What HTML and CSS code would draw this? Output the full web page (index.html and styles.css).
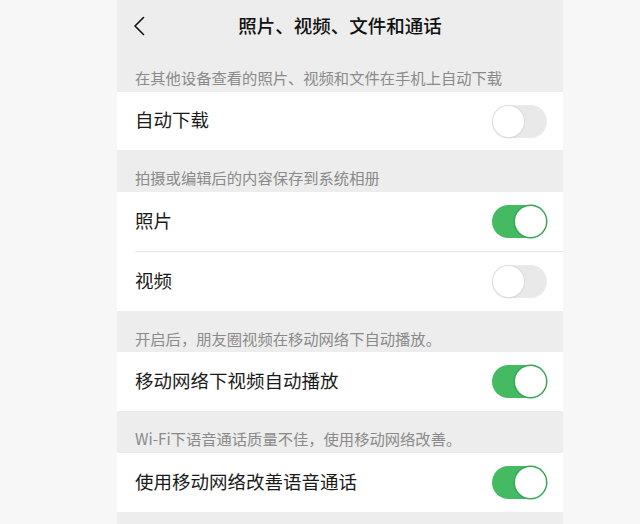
FILE: index.html
```html
<!DOCTYPE html>
<html lang="zh-CN">
<head>
<meta charset="utf-8">
<title>照片、视频、文件和通话</title>
<link rel="stylesheet" href="styles.css">
</head>
<body>
<div class="phone">
  <header class="nav">
    <svg class="back" width="12" height="20" viewBox="0 0 12 20"><path d="M10.5 1.5 L2 10 L10.5 18.5" fill="none" stroke="#111" stroke-width="1.6" stroke-linecap="round" stroke-linejoin="round"/></svg>
    <h1 class="title">照片、视频、文件和通话</h1>
  </header>

  <div class="caption">在其他设备查看的照片、视频和文件在手机上自动下载</div>
  <div class="group">
    <div class="row first"><span class="label">自动下载</span><span class="switch"></span></div>
  </div>

  <div class="caption">拍摄或编辑后的内容保存到系统相册</div>
  <div class="group">
    <div class="row"><span class="label">照片</span><span class="switch on"></span></div>
    <div class="divider"></div>
    <div class="row"><span class="label">视频</span><span class="switch"></span></div>
  </div>

  <div class="caption short">开启后，朋友圈视频在移动网络下自动播放。</div>
  <div class="group">
    <div class="row"><span class="label">移动网络下视频自动播放</span><span class="switch on"></span></div>
  </div>

  <div class="caption">Wi-Fi下语音通话质量不佳，使用移动网络改善。</div>
  <div class="group">
    <div class="row"><span class="label">使用移动网络改善语音通话</span><span class="switch on"></span></div>
  </div>
</div>
</body>
</html>
```

FILE: styles.css
```css
html, body {
  margin: 0;
  padding: 0;
  background: #f7f7f7;
  height: 100%;
  overflow: hidden;
}
body {
  font-family: "Noto Sans CJK SC", "Noto Sans", sans-serif;
}
.phone {
  margin-left: 117px;
  width: 446px;
  height: 524px;
  background: #ededed;
  display: flex;
  flex-direction: column;
}
.nav {
  height: 50px;
  display: flex;
  align-items: center;
  justify-content: center;
  position: relative;
}
.back {
  position: absolute;
  left: 16px;
  top: 16px;
}
.title {
  margin: 0;
  font-size: 18.5px;
  font-weight: 500;
  color: #111;
  line-height: 1;
}
.caption {
  height: 42px;
  box-sizing: border-box;
  padding: 17px 0 0 18px;
  font-size: 15.3px;
  line-height: 20px;
  color: #8a8a8a;
}
.caption.short { height: 41px; }
.group {
  background: #fff;
  display: flex;
  flex-direction: column;
}
.row {
  height: 59px;
  display: flex;
  align-items: center;
  justify-content: space-between;
  padding: 0 16px 0 18px;
}
.row.first { height: 58px; }
.divider {
  height: 1px;
  margin-left: 18px;
  background: #e6e6e6;
}
.label {
  font-size: 18.5px;
  color: #1a1a1a;
  line-height: 1;
  margin-top: -3px;
}
.switch {
  width: 55px;
  height: 33px;
  box-sizing: border-box;
  border-radius: 17px;
  background: #e9e9e9;
  position: relative;
  flex: none;
}
.switch::after {
  content: "";
  position: absolute;
  left: 1px;
  top: 1px;
  width: 31px;
  height: 31px;
  border-radius: 50%;
  background: #fff;
  box-shadow: 0 0 0 1px #dcdcdc, 0 1px 2px rgba(0,0,0,0.12);
}
.switch.on {
  background: #44ba63;
}
.switch.on::after {
  left: 23px;
  box-shadow: 0 0 0 1.5px #3aa557;
}
```
